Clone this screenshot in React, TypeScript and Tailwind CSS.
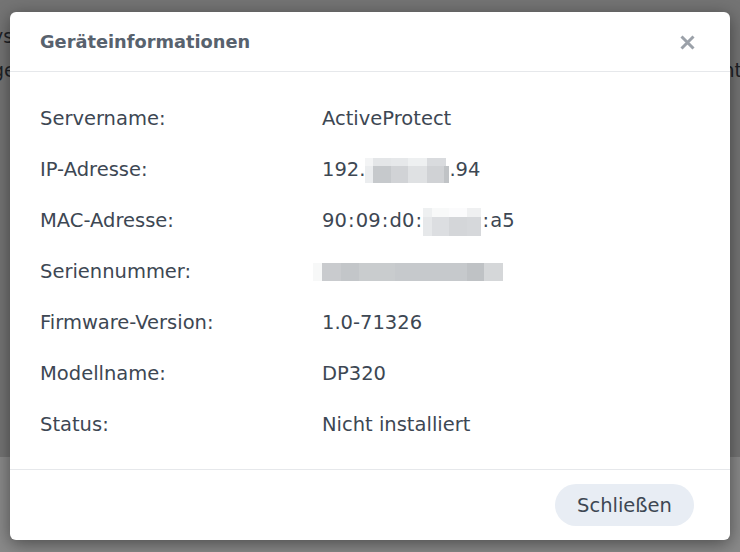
import React from "react";

function Row({ label, children }: { label: string; children: React.ReactNode }) {
  return (
    <div className="grid grid-cols-[282px_1fr] h-[51px] items-center">
      <div>{label}</div>
      <div className="flex items-center">{children}</div>
    </div>
  );
}

function C() {
  return <span className="px-[1.2px]">:</span>;
}

export default function App() {
  return (
    <div className="relative w-[740px] h-[552px] overflow-hidden font-['DejaVu_Sans',Verdana,sans-serif]">
      {/* page behind the overlay */}
      <div className="absolute inset-0 flex flex-col">
        <div className="h-[457px] bg-[#747474] text-[19px] text-[#1e2227]">
          <div className="flex justify-between pt-[22px] h-[56px]">
            <span className="-ml-[8px]">ys</span>
            <span className="-mr-[12px]">n</span>
          </div>
          <div className="flex justify-between h-[36px]">
            <span className="-ml-[8px]">ge</span>
            <span className="-mr-[2px]">nt</span>
          </div>
        </div>
        <div className="flex-1 bg-[#8a8a8a]" />
      </div>

      {/* dialog */}
      <div className="absolute left-[10px] top-[12px] w-[720px] h-[528px] bg-white rounded-[6px] shadow-[0_4px_18px_rgba(0,0,0,0.45)] flex flex-col text-[#3d4753]">
        <div className="h-[60px] border-b border-[#e6e8eb] flex items-center justify-between pl-[30px] pr-[35px]">
          <div className="text-[17.8px] font-bold text-[#58626e] mt-[1px]">Geräteinformationen</div>
          <svg width="15" height="15" viewBox="0 0 15 15" className="mt-[1px]">
            <path d="M1.5 1.5 L13.5 13.5 M13.5 1.5 L1.5 13.5" stroke="#9ba1a9" strokeWidth="3" strokeLinecap="butt" />
          </svg>
        </div>

        <div className="h-[397px] pl-[30px] pt-[21px] text-[19.5px]">
          <Row label="Servername:">ActiveProtect</Row>
          <Row label="IP-Adresse:">
            <span>192.</span>
            <span className="flex flex-col w-[84px] h-[25px] mt-[1px]">
              <span className="flex h-[8px]">
                <span className="w-[8px] bg-[#f3f4f5]" />
                <span className="w-[18px] bg-[#e4e6e8]" />
                <span className="w-[17px] bg-[#e6e8ea]" />
                <span className="w-[19px] bg-[#eef0f1]" />
                <span className="w-[19px] bg-[#d9dbde]" />
                <span className="w-[3px] bg-[#ffffff]" />
              </span>
              <span className="flex flex-1">
                <span className="w-[8px] bg-[#ebedef]" />
                <span className="w-[18px] bg-[#c6c9cc]" />
                <span className="w-[17px] bg-[#d1d3d6]" />
                <span className="w-[19px] bg-[#dfe1e3]" />
                <span className="w-[17px] bg-[#d0d2d5]" />
                <span className="w-[5px] bg-[#c0c3c6]" />
              </span>
            </span>
            <span>.94</span>
          </Row>
          <Row label="MAC-Adresse:">
            <span>90<C />09<C />d0<C /></span>
            <span className="flex flex-col w-[58px] h-[28px] mt-[2px]">
              <span className="flex h-[9px]">
                <span className="w-[9px] bg-[#eef0f1]" />
                <span className="w-[17px] bg-[#f8f9f9]" />
                <span className="w-[18px] bg-[#fbfbfc]" />
                <span className="w-[14px] bg-[#eff0f1]" />
              </span>
              <span className="flex flex-1">
                <span className="w-[9px] bg-[#e6e8ea]" />
                <span className="w-[17px] bg-[#dcdee1]" />
                <span className="w-[18px] bg-[#d4d6d9]" />
                <span className="w-[14px] bg-[#d6d8db]" />
              </span>
            </span>
            <span><C />a5</span>
          </Row>
          <Row label="Seriennummer:">
            <span className="flex w-[190px] h-[18px] -ml-[9px] mt-[1px]">
              <span className="w-[9px] bg-[#f7f8f8]" />
              <span className="w-[19px] bg-[#c9cbce]" />
              <span className="w-[18px] bg-[#c3c6c9]" />
              <span className="w-[36px] bg-[#c9ccce]" />
              <span className="w-[72px] bg-[#c6c9cc]" />
              <span className="w-[17px] bg-[#bfc2c5]" />
              <span className="w-[19px] bg-[#d5d7d9]" />
            </span>
          </Row>
          <Row label="Firmware-Version:">1.0-71326</Row>
          <Row label="Modellname:">DP320</Row>
          <Row label="Status:">Nicht installiert</Row>
        </div>

        <div className="flex-1 border-t border-[#e6e8eb] flex items-center justify-end pr-[36px]">
          <button className="w-[139px] h-[42px] rounded-full bg-[#e8edf4] text-[19.5px] text-[#3d4753] pt-[2px]">
            Schließen
          </button>
        </div>
      </div>
    </div>
  );
}
